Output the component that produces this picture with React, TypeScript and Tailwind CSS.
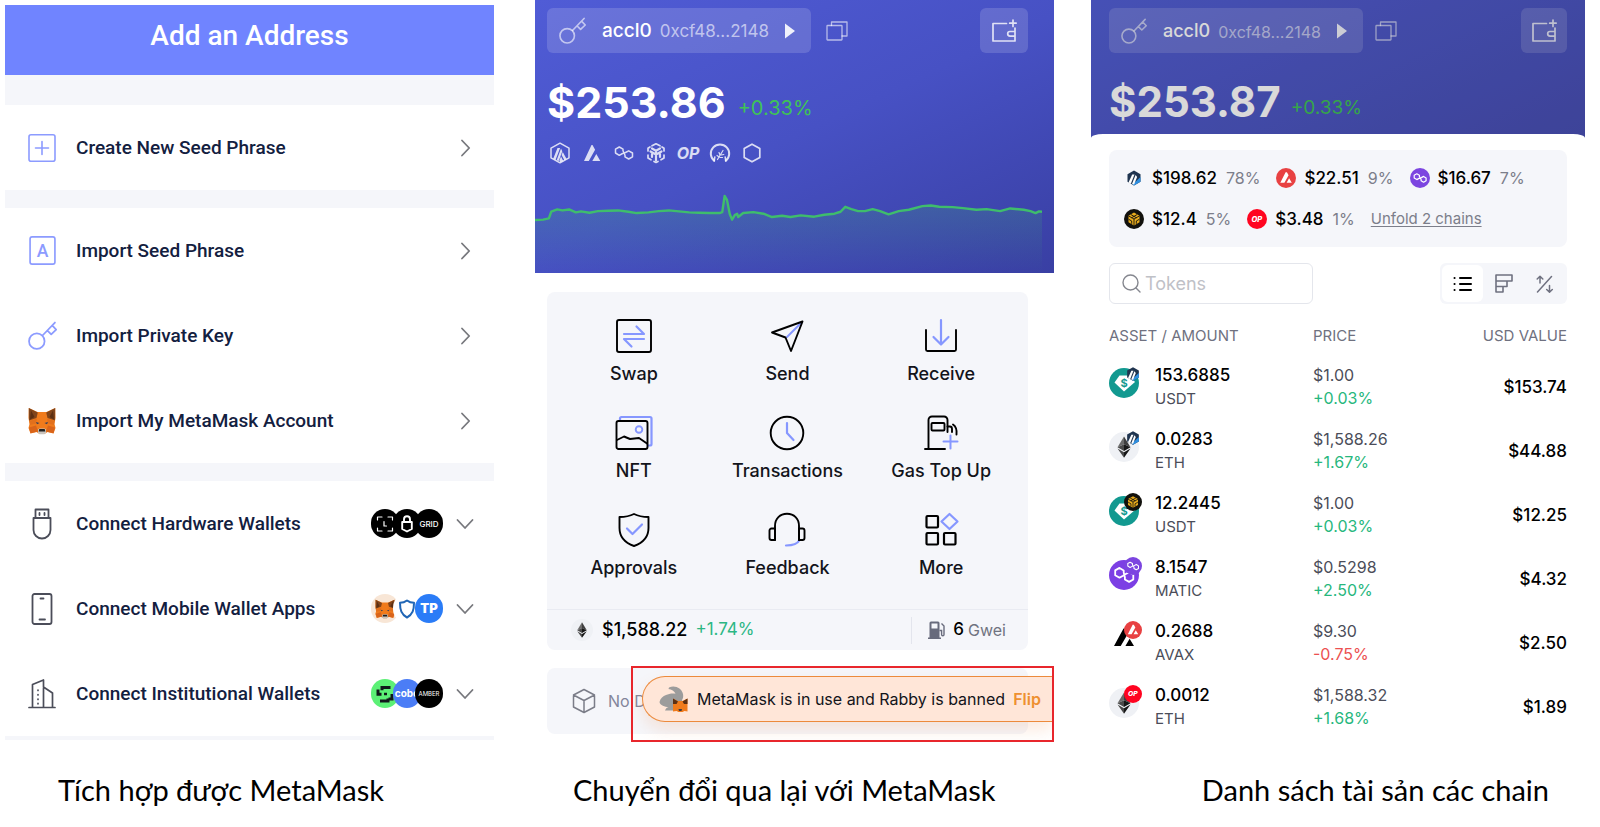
import type { ReactNode } from "react";

type IconProps = { className?: string };

const stroke = {
  fill: "none",
  stroke: "currentColor",
  strokeLinecap: "round" as const,
  strokeLinejoin: "round" as const,
};

/* ---------- shared icons ---------- */

function KeyIcon({ className }: IconProps) {
  return (
    <svg viewBox="0 0 28 28" className={className} {...stroke} strokeWidth="1.7" aria-hidden="true">
      <circle cx="8.5" cy="19.5" r="7.5" />
      <path d="M14 14 26 1.5M18.8 9.3l3.6 3.6 4.8-4.6-3.6-3.8" />
    </svg>
  );
}

function FoxIcon({ className }: IconProps) {
  return (
    <svg viewBox="0 0 28 28" className={className} aria-hidden="true">
      <path d="M.8 1 9.500 5h9L27.200 1l.3 10-1 6 1 4-2 5.500-6-1.600-3 2h-5l-3-2-6 1.600-2-5.500 1-4-1-6z" fill="#f07b1c" />
      <path d="M.8 1l9 4.500L8.500 11 1 13.500zM27.200 1l-9 4.500 1.300 5.500 7.500 2.500z" fill="#81441a" />
      <path d="M3 3.500 6.500 10 2 12.500zM25 3.500 21.500 10l4.500 2.500z" fill="#5c2f12" />
      <path d="M1.500 14 9 11.500l-1 5-6 1.500zM26.500 14 19 11.500l1 5 6 1.500z" fill="#e2701c" />
      <path d="M1 20.500 8 18.500l2 6-7.500 1.800zM27 20.500 20 18.500l-2 6 7.500 1.800z" fill="#d9641a" />
      <path d="M8 15l3.500 1-2.500 1.200zM20 15l-3.500 1 2.500 1.200z" fill="#333f5c" />
      <path d="M10 22.500l1.500-1h5l1.500 1v3l-1.600 1.700h-4.800L10 25.500z" fill="#c9c3bd" />
      <path d="M11.300 22h5.400l.6 2.400h-6.600z" fill="#22201f" />
    </svg>
  );
}

function EthMark({ className }: IconProps) {
  return (
    <svg viewBox="0 0 30 30" className={className} aria-hidden="true">
      <circle cx="15" cy="15" r="15" fill="#eff1f5" />
      <path d="M15 4.500 8.500 15.200 15 12.300z" fill="#6b6b6b" />
      <path d="M15 4.500l6.500 10.700L15 12.300z" fill="#3f3f3f" />
      <path d="M8.500 15.200 15 12.300V19zM8.500 16.600 15 20.300v5.400z" fill="#4a4a4a" />
      <path d="M21.500 15.200 15 12.300V19zM21.500 16.600 15 20.300v5.400z" fill="#171717" />
    </svg>
  );
}

/* ---------- chain badges ---------- */

function Arbitrum({ className }: IconProps) {
  return (
    <svg viewBox="0 0 20 20" className={className} aria-hidden="true">
      <path d="M10 2.500l6.500 3.700v7.600L10 17.500l-6.500-3.700V6.200z" fill="#1f344f" />
      <path d="M16.500 9v4.800L10 17.500 8.500 16.500z" fill="#2f8fe0" />
      <path d="M8.200 6.500h2.300L6.800 15.700l-2.300-1.300z" fill="#fff" />
      <path d="M11.600 7l1.500 2-3 7.500-2.100-.5z" fill="#fff" />
    </svg>
  );
}

function Avalanche({ className }: IconProps) {
  return (
    <svg viewBox="0 0 20 20" className={className} aria-hidden="true">
      <circle cx="10" cy="10" r="10" fill="#e84142" />
      <path d="M9.600 4.200h1.300l1.700 3.100-4.200 7.500H4.300zM13.100 10.300l2.700 4.500h-5.200z" fill="#fff" />
    </svg>
  );
}

function Polygon({ className }: IconProps) {
  return (
    <svg viewBox="0 0 20 20" className={className} aria-hidden="true">
      <circle cx="10" cy="10" r="10" fill="#7c45e0" />
      <path
        d="M9 10.400 6.800 11.600 4.200 10.100V7.300l2.600-1.500 2.600 1.500v1.200l1.700 3v1.200l2.500 1.500 2.500-1.500V9.900l-2.500-1.500-2.200 1.200z"
        fill="none"
        stroke="#fff"
        strokeWidth="1.200"
        strokeLinejoin="round"
      />
    </svg>
  );
}

function Bnb({ className }: IconProps) {
  return (
    <svg viewBox="0 0 20 20" className={className} aria-hidden="true">
      <circle cx="10" cy="10" r="10" fill="#12110d" />
      <path d="M10 3.500l5.500 3.200v6.600L10 16.500l-5.500-3.200V6.700z" fill="#e8ab1c" />
      <path d="M4.500 6.900 10 10l5.500-3.100M10 10v6.500M6.800 5.500 12.500 8.800M13.200 5.500 7.500 8.800M4.700 10.300l3 1.700v2.800M15.300 10.300l-3 1.700v2.800" fill="none" stroke="#12110d" strokeWidth="0.900" />
    </svg>
  );
}

function Optimism({ className }: IconProps) {
  return (
    <svg viewBox="0 0 20 20" className={className} role="img" aria-label="Optimism">
      <circle cx="10" cy="10" r="10" fill="#ff0420" />
      <text x="9.800" y="12.600" textAnchor="middle" fontSize="7.500" fontWeight="800" fontStyle="italic" fill="#fff" className="font-['Inter',sans-serif]">
        OP
      </text>
    </svg>
  );
}

/* ---------- token icons ---------- */

function Usdt({ className }: IconProps) {
  return (
    <svg viewBox="0 0 30 30" className={className} role="img" aria-label="Tether">
      <circle cx="15" cy="15" r="15" fill="#129990" />
      <path d="M10.500 7.500h10L26 14 15 23.500 5.500 14.500z" fill="#fff" />
      <text x="15" y="18.500" textAnchor="middle" fontSize="11" fontWeight="700" fill="#129990" className="font-['Inter',sans-serif]">
        $
      </text>
    </svg>
  );
}

function Matic({ className }: IconProps) {
  return (
    <svg viewBox="0 0 30 30" className={className} aria-hidden="true">
      <circle cx="15" cy="15" r="15" fill="#7c3fe4" />
      <path
        d="M14 15.700 10.500 17.700 6.200 15.200V10.400l4.300-2.500 4.200 2.500v2.200l1.200 4.600v2.300l4.200 2.400 4.200-2.400v-4.900l-4.200-2.400-3.800 2.100z"
        fill="none"
        stroke="#fff"
        strokeWidth="1.800"
        strokeLinejoin="round"
      />
    </svg>
  );
}

function Avax({ className }: IconProps) {
  return (
    <svg viewBox="0 0 30 30" className={className} aria-hidden="true">
      <path d="M14.500 4.500h2l2.700 4.800L11.700 22H5zM20.600 14.800 25 22h-8.600z" fill="#000" />
    </svg>
  );
}

/* ---------- left panel ---------- */

function PlusBox({ className }: IconProps) {
  return (
    <svg viewBox="0 0 28 28" className={className} {...stroke} strokeWidth="1.600" aria-hidden="true">
      <rect x="1" y="0.800" width="26" height="26.400" rx="2" />
      <path d="M14 7.500v13M7.500 14h13" />
    </svg>
  );
}

function LetterBox({ className }: IconProps) {
  return (
    <svg viewBox="0 0 28 28" className={className} role="img" aria-label="Seed phrase">
      <rect x="2" y="0.800" width="24" height="26.400" rx="2" {...stroke} strokeWidth="1.600" />
      <text x="14" y="20" textAnchor="middle" fontSize="17" fontWeight="500" fill="currentColor" className="font-['Roboto',sans-serif]">
        A
      </text>
    </svg>
  );
}

function UsbIcon({ className }: IconProps) {
  return (
    <svg viewBox="0 0 30 32" className={className} {...stroke} strokeWidth="1.800" aria-hidden="true">
      <path d="M8.500 10V1.500h13V10M6.500 10h17v12a8.500 8.500 0 0 1-17 0z" />
      <path d="M12.500 5v2M17.500 5v2" />
    </svg>
  );
}

function PhoneIcon({ className }: IconProps) {
  return (
    <svg viewBox="0 0 30 32" className={className} {...stroke} strokeWidth="1.800" aria-hidden="true">
      <rect x="5.500" y="1" width="19" height="30" rx="2" />
      <path d="M13.500 5.500h3M12.500 26.500h5.500" />
    </svg>
  );
}

function BuildingIcon({ className }: IconProps) {
  return (
    <svg viewBox="0 0 30 32" className={className} {...stroke} strokeWidth="1.700" aria-hidden="true">
      <path d="M2 29.500h26M5.500 29.500V6.500L16.500 2v27.500M16.500 9l9 6v14.500" />
      <path d="M11 12v.5M11 16.500v.5M11 21v.5M11 25.300v.5" />
    </svg>
  );
}

function Chevron({ down = false }: { down?: boolean }) {
  return (
    <svg viewBox="0 0 18 18" className="size-[18px] text-[#77787d]" {...stroke} strokeWidth="1.800" aria-hidden="true">
      <path d={down ? "M1.500 5 9 13l7.500-8" : "M6 1.500 13.200 9 6 16.500"} />
    </svg>
  );
}

function Disc({ children, className }: { children: ReactNode; className: string }) {
  return (
    <span className={"-ml-1.5 flex h-[29px] w-7 items-center justify-center overflow-hidden rounded-full font-['Inter',sans-serif] " + className}>
      {children}
    </span>
  );
}

const hardwareLogos = (
  <>
    <Disc className="bg-black text-white">
      <svg viewBox="0 0 18 18" className="size-[18px]" {...stroke} strokeWidth="1.200" aria-hidden="true">
        <path d="M1.500 5V2H6M12 2h4.500v3M1.500 13v3H6M12 16h4.500v-3M8 6.500v4.500h2.500" />
      </svg>
    </Disc>
    <Disc className="bg-black text-white">
      <svg viewBox="0 0 14 18" className="h-[18px] w-3.5" {...stroke} strokeWidth="1.900" aria-hidden="true">
        <path d="M4 7V4.200a3 3 0 0 1 6 0V7M2.200 7h9.600v7L7 16.500 2.200 14z" />
      </svg>
    </Disc>
    <Disc className="bg-black text-[8px] font-medium text-white">GRID</Disc>
  </>
);

const mobileLogos = (
  <>
    <Disc className="bg-[#f8e6d6]">
      <FoxIcon className="size-5" />
    </Disc>
    <Disc className="bg-white text-[#2166b5]">
      <svg viewBox="0 0 18 20" className="h-5 w-[18px]" {...stroke} strokeWidth="2" aria-hidden="true">
        <path d="M9 1.500c2.200 1.700 4.500 2.300 7 2.300 0 7.200-1.300 11.700-7 14.700C3.300 15.500 2 11 2 3.800c2.500 0 4.800-.6 7-2.300z" />
      </svg>
    </Disc>
    <Disc className="bg-[#2a7cf7] text-[13px] font-black text-white">TP</Disc>
  </>
);

const institutionLogos = (
  <>
    <Disc className="bg-[#5cf076] text-[#10181a]">
      <svg viewBox="0 0 18 18" className="size-[18px]" fill="none" stroke="currentColor" strokeWidth="3" aria-hidden="true">
        <path d="M14.500 2.500H6v2.800M2 4.500v4.800h3.500M16 9v5h-3.500M4 16h8v-2.500" />
        <path d="M8 9h3" strokeWidth="2.500" />
      </svg>
    </Disc>
    <Disc className="bg-[#4b7df6] text-[10px] font-bold text-white">cobo</Disc>
    <Disc className="bg-black text-[6px] text-white">AMBER</Disc>
  </>
);

function OptionRow({ icon, label, logos }: { icon: ReactNode; label: string; logos?: ReactNode }) {
  return (
    <button type="button" className="flex h-[85px] w-full items-center pr-5 pl-[21px] text-left">
      <span className="flex w-8 justify-center">{icon}</span>
      <span className="ml-[18px] flex-1 pt-0.5 text-[19px] font-medium whitespace-nowrap text-[#13203f]">{label}</span>
      {logos && <span className="mr-[13px] flex">{logos}</span>}
      <Chevron down={Boolean(logos)} />
    </button>
  );
}

function AddAddressPanel() {
  return (
    <section className="pt-[5px] pr-1 font-['Roboto',sans-serif]">
      <h1 className="flex h-[70px] items-center justify-center bg-[#7084ff] pb-2 text-[28px] font-medium text-white">
        Add an Address
      </h1>
      <div className="h-[30px] bg-[#f5f6fa]" />
      <OptionRow icon={<PlusBox className="size-7 text-[#8c9bff]" />} label="Create New Seed Phrase" />
      <div className="h-[18px] bg-[#f5f6fa]" />
      <OptionRow icon={<LetterBox className="size-[29px] text-[#8c9bff]" />} label="Import Seed Phrase" />
      <OptionRow icon={<KeyIcon className="size-[29px] text-[#8c9bff]" />} label="Import Private Key" />
      <OptionRow icon={<FoxIcon className="size-7" />} label="Import My MetaMask Account" />
      <div className="h-[18px] bg-[#f5f6fa]" />
      <OptionRow icon={<UsbIcon className="h-8 w-[30px] text-[#4b4d59]" />} label="Connect Hardware Wallets" logos={hardwareLogos} />
      <OptionRow icon={<PhoneIcon className="h-8 w-[30px] text-[#4b4d59]" />} label="Connect Mobile Wallet Apps" logos={mobileLogos} />
      <OptionRow icon={<BuildingIcon className="h-8 w-[30px] text-[#4b4d59]" />} label="Connect Institutional Wallets" logos={institutionLogos} />
      <div className="h-1 bg-[#f5f6fa]" />
    </section>
  );
}

/* ---------- wallet header ---------- */

function AccountBar({ compact = false }: { compact?: boolean }) {
  return (
    <div className="flex items-center text-white">
      <button type="button" className="flex h-[45px] items-center rounded-md bg-white/15 pr-4 pl-3">
        <KeyIcon className={compact ? "size-[26px] text-white/60" : "size-[27px] text-white/60"} />
        <span className={compact ? "ml-4 text-lg font-medium" : "ml-4 pt-0.5 text-[19px] font-medium"}>accl0</span>
        <span className={compact ? "ml-2 pt-0.5 text-base text-white/60" : "ml-2 pt-0.5 text-[17px] text-white/60"}>0xcf48...2148</span>
        <svg viewBox="0 0 10 16" className="ml-4 h-4 w-2.5 text-white/90" aria-hidden="true">
          <path d="M0 0.500 10 8 0 15.500z" fill="currentColor" />
        </svg>
      </button>
      <button type="button" aria-label="Copy address" className={compact ? "ml-3 text-white/60" : "ml-[15px] text-white/60"}>
        <svg viewBox="0 0 22 20" className="h-5 w-[22px]" {...stroke} strokeWidth="1.300" aria-hidden="true">
          <rect x="1" y="4.500" width="15" height="14.500" rx="0.500" />
          <path d="M5.500 4.500V1H21v14h-5" />
        </svg>
      </button>
      <button
        type="button"
        aria-label="Add wallet"
        className={
          (compact ? "w-[46px]" : "w-12") + " ml-auto flex h-[45px] items-center justify-center rounded-md bg-white/15 text-white/80"
        }
      >
        <svg viewBox="0 0 26 24" className="h-6 w-[26px]" {...stroke} strokeWidth="1.700" aria-hidden="true">
          <path d="M15.500 4.500H2V22h22V9M24 12.500h-5a2.300 2.300 0 0 0 0 4.600H24M22 1v6.500M18.700 4.200h6.500" />
        </svg>
      </button>
    </div>
  );
}

function Balance({ value, compact = false }: { value: string; compact?: boolean }) {
  return (
    <div className={compact ? "mt-6 flex items-end gap-2.5" : "mt-6 flex items-end gap-3"}>
      <span className={(compact ? "text-[42px]" : "text-[43px]") + " leading-[50px] font-bold text-white"}>{value}</span>
      <span className={(compact ? "text-[19px]" : "text-xl") + " leading-[38px] text-[#3fc257]"}>+0.33%</span>
    </div>
  );
}

const trend =
  "M14 659 38 658 55 654 62 634 80 627 95 630 115 627 135 636 150 633 175 637 200 632 230 631 260 630 290 634 315 638 350 636 380 632 410 630 440 633 470 636 500 637 530 638 560 638 568 635 575 586 582 598 590 640 597 658 605 644 612 640 615 650 630 638 660 635 690 640 715 650 745 646 770 650 800 645 840 649 870 643 900 640 918 634 932 619 950 626 970 632 990 632 1013 626 1035 632 1060 642 1090 632 1120 628 1160 617 1185 615 1210 619 1250 620 1280 623 1320 628 1350 626 1390 632 1420 624 1460 628 1480 632 1495 638 1505 633 1514 634";

function TrendChart() {
  return (
    <svg viewBox="14 571 1500 249" preserveAspectRatio="none" className="block h-[82px] w-full" role="img" aria-label="Balance over the last day">
      <defs>
        <linearGradient id="trend-fill" x1="0" y1="0" x2="0" y2="1">
          <stop offset="0" stopColor="#3fb56f" stopOpacity="0.240" />
          <stop offset="1" stopColor="#3fb56f" stopOpacity="0" />
        </linearGradient>
      </defs>
      <path d={trend + "V820H14z"} fill="url(#trend-fill)" />
      <path d={trend} fill="none" stroke="#3fbd6c" strokeWidth="2.400" strokeLinejoin="round" vectorEffect="non-scaling-stroke" />
    </svg>
  );
}

function ChainStrip() {
  const box = "size-[22px]";
  return (
    <div className="mt-[15px] flex gap-2.5 pl-0.5 text-white/80">
      <svg viewBox="0 0 22 22" className={box} aria-hidden="true">
        <path d="M11 1.200l9 5v9.600l-9 5-9-5V6.200z" {...stroke} strokeWidth="1.500" />
        <path d="M8.500 6h2.600L6.500 18 4.200 16.700zM12 6.500l1.300 2.800L9.700 19l-2-.8zM13.800 10l3.800 7-2.200 1.300-2.800-5.300zM12 14.500l2.300 4.500-3 1.300-1-1.500z" fill="currentColor" />
      </svg>
      <svg viewBox="0 0 22 22" className={box} aria-hidden="true">
        <path d="M10.500 3h1l2.600 4.800L7.800 19H3zM15.300 12l4 7h-8z" fill="currentColor" />
      </svg>
      <svg viewBox="0 0 22 22" className={box} {...stroke} strokeWidth="1.500" aria-hidden="true">
        <path d="M9.500 11.500 6.300 13.300 2.500 11V7.200l3.800-2.200L10 7.200v1.600l2 4.400v1.600l3.700 2.200 3.800-2.200v-3.800l-3.800-2.200-3.200 1.700z" />
      </svg>
      <svg viewBox="0 0 22 22" className={box} {...stroke} strokeWidth="1.700" aria-hidden="true">
        <path d="M7 3.800 11 1.800l4 2M3 9V6.300L5 5M19 9V6.300L17 5M3 13v3l3 1.800M19 13v3l-3 1.800M9 19.500l2 1 2-1" />
        <path d="M7 6.500l4 2.200 4-2.200M5.500 9.500 11 12.500l5.500-3M11 9v9.500M7 11.500v3.500M15 11.500v3.500" strokeWidth="2.200" />
      </svg>
      <svg viewBox="0 0 22 22" className={box + " overflow-visible"} role="img" aria-label="Optimism">
        <text x="11" y="17" textAnchor="middle" fontSize="16" fontWeight="700" fontStyle="italic" fill="currentColor" className="font-['Inter',sans-serif]">
          OP
        </text>
      </svg>
      <svg viewBox="0 0 22 22" className={box} {...stroke} strokeWidth="2" aria-hidden="true">
        <path d="M5.200 18.800a9.200 9.200 0 1 1 11.600 0" />
        <path d="M5.200 18.800 5.800 15M16.800 18.800 16.200 15" strokeWidth="1.600" />
        <path d="M8.500 17.500l5.500-9M8 13.500l2 1.500M10 10.500l1 2.500M14.800 12.500l-2.500.5M13.500 15.500l-2.500 0" strokeWidth="1.200" />
      </svg>
      <svg viewBox="0 0 22 22" className={box} {...stroke} strokeWidth="1.700" aria-hidden="true">
        <path d="M11 2.200l7.800 4.400v8.800L11 19.800l-7.800-4.400V6.600z" />
      </svg>
    </div>
  );
}

/* ---------- actions ---------- */

const accent = "#8697ff";

function ActionSvg({ children }: { children: ReactNode }) {
  return (
    <svg viewBox="0 0 38 36" className="h-9 w-[38px] text-black" {...stroke} strokeWidth="1.900" aria-hidden="true">
      {children}
    </svg>
  );
}

const actions: { label: string; icon: ReactNode }[] = [
  {
    label: "Swap",
    icon: (
      <>
        <rect x="2" y="2" width="34" height="32" rx="2" />
        <path d="M9 16h20l-7.500-7.500M29 21H9l7.500 7.500" stroke={accent} strokeWidth="2.200" />
      </>
    ),
  },
  {
    label: "Send",
    icon: (
      <>
        <path d="M19 19 34 4" stroke={accent} strokeWidth="2" />
        <path d="M34.500 3.500 4 14.500l13.500 5L23 33z" />
      </>
    ),
  },
  {
    label: "Receive",
    icon: (
      <>
        <path d="M4 12v19.500a1.500 1.500 0 0 0 1.500 1.500h27a1.500 1.500 0 0 0 1.500-1.500V12" />
        <path d="M19 2v24M11.500 19l7.500 7.500 7.500-7.500" stroke={accent} strokeWidth="2.200" />
      </>
    ),
  },
  {
    label: "NFT",
    icon: (
      <>
        <path d="M5 6V3.500A1.500 1.500 0 0 1 6.500 2H35a1.500 1.500 0 0 1 1.500 1.500V29a1.500 1.500 0 0 1-1.500 1.500h-2" stroke={accent} strokeWidth="2.200" />
        <rect x="1.500" y="6" width="31" height="28" rx="2" />
        <circle cx="24" cy="14.500" r="3.300" stroke={accent} />
        <path d="M2 25l7-3.500L15 24l9-1 8 5.500" />
      </>
    ),
  },
  {
    label: "Transactions",
    icon: (
      <>
        <circle cx="19" cy="18" r="16.300" />
        <path d="M19 8v10l6.500 7" stroke={accent} strokeWidth="2.200" />
      </>
    ),
  },
  {
    label: "Gas Top Up",
    icon: (
      <>
        <path d="M3 34h20M6.500 34V5a3.500 3.500 0 0 1 3.500-3.500h12A3.500 3.500 0 0 1 25.500 5v12" />
        <rect x="9.500" y="8" width="13" height="7.500" rx="1" />
        <path d="M25.500 11.500h2.500c1.500 0 2 1 2 2.500v3M31 9.500c3 2 4 5.500 3.500 10" />
        <path d="M28.500 20.500v13M21.500 26.500h14" stroke={accent} strokeWidth="2" />
      </>
    ),
  },
  {
    label: "Approvals",
    icon: (
      <>
        <path d="M19 2c4.500 2.300 9.500 3 14.500 3v11c0 9-6 15-14.500 18C10.500 31 4.500 25 4.500 16V5c5 0 10-.7 14.500-3z" />
        <path d="M12 16.500l5.500 5.500 9.500-9.500" stroke={accent} strokeWidth="2.200" />
      </>
    ),
  },
  {
    label: "Feedback",
    icon: (
      <>
        <path d="M31.500 28c-2 4-6 5.500-13.500 5.500" stroke={accent} strokeWidth="2.200" />
        <path d="M7 28V14C7 6.500 12 1.800 19 1.800S31 6.500 31 14v14" />
        <path d="M7 16.500H3.500A2 2 0 0 0 1.500 18.500V26A2 2 0 0 0 3.500 28H7zM31 16.500h3.500a2 2 0 0 1 2 2V26a2 2 0 0 1-2 2H31z" />
      </>
    ),
  },
  {
    label: "More",
    icon: (
      <>
        <rect x="4.500" y="4" width="11.500" height="11.500" rx="1" strokeWidth="2.200" />
        <rect x="4.500" y="21" width="11.500" height="11.500" rx="1" strokeWidth="2.200" />
        <rect x="22" y="21" width="11.500" height="11.500" rx="1" strokeWidth="2.200" />
        <path d="M27.500 2l8 7.500-8 7.500-8-7.500z" stroke={accent} strokeWidth="2.200" />
      </>
    ),
  },
];

function RabbyBadge() {
  return (
    <svg viewBox="0 0 30 26" className="h-[26px] w-[30px]" aria-hidden="true">
      <path
        d="M10 1.500C16-1 22.500 2 24 8c.5 2.500 0 4.500-1 6 1.500 3 0 8-2 10.500H6c1-2.500 2-3 3.500-3.500C6 21 1 19.500.5 16 1.500 12 4 10 7 9c3-1.500 7-2 9.500-1.200C15.500 5 12.500 3.200 9.500 3z"
        fill="#9c9c9c"
      />
      <path d="M14 12.500l5 2.500h4.500l5-2.500V25.500l-3-.5-2 1h-4l-2-1-3.500.5z" fill="#f07b1c" />
      <path d="M14 12.500l5 3-1.500 2.500H14zM28.500 12.500l-5 3 1.500 2.500h3.500z" fill="#5c3013" />
      <path d="M19.500 23h3.500l-.5 2h-2.500z" fill="#3c3c44" />
    </svg>
  );
}

function HomePanel() {
  return (
    <section className="font-['Inter',sans-serif]">
      <header className="bg-linear-155 from-[#505cd6] via-[#4751c4] to-[#393fa3]">
        <div className="pt-2 pr-[26px] pl-3">
          <AccountBar />
          <Balance value="$253.86" />
          <ChainStrip />
        </div>
        <div className="mt-[27px] pr-3">
          <TrendChart />
        </div>
      </header>

      <div className="mt-[19px] mr-[26px] ml-3 rounded-lg bg-[#f5f6fa]">
        <div className="grid grid-cols-3 gap-y-[29px] px-2.5 pt-[26px] pb-[29px]">
          {actions.map((action) => (
            <button key={action.label} type="button" className="flex h-[68px] flex-col items-center justify-between">
              <ActionSvg>{action.icon}</ActionSvg>
              <span className="text-lg leading-6 font-medium whitespace-nowrap text-[#13141a]">{action.label}</span>
            </button>
          ))}
        </div>
        <div className="flex h-[41px] items-center border-t border-[#e9ebf2] pr-[22px] pl-6">
          <EthMark className="size-[22px]" />
          <span className="ml-[9px] text-lg font-medium text-black">$1,588.22</span>
          <span className="ml-2 text-[17px] text-[#2bb784]">+1.74%</span>
          <span className="mr-4 ml-auto h-[27px] w-px bg-[#e3e5ed]" />
          <svg viewBox="0 0 18 18" className="size-[18px] text-[#686b7c]" aria-hidden="true">
            <path d="M1.500 16.500V2A1.500 1.500 0 0 1 3 .5h7A1.500 1.500 0 0 1 11.500 2v14.500H13V18H0v-1.500zM3.500 2.500v5h6v-5z" fill="currentColor" fillRule="evenodd" />
            <path d="M13.500 2.500 16 5v8.500a1.200 1.200 0 0 1-2.400 0V9.500H11.500" fill="none" stroke="currentColor" strokeWidth="1.400" />
          </svg>
          <span className="ml-[7px] text-[17px] font-medium text-black">6</span>
          <span className="ml-1 text-base text-[#707380]">Gwei</span>
        </div>
      </div>

      <div className="relative mt-[18px]">
        <div className="mr-[26px] ml-3 flex h-[66px] items-center rounded-lg bg-[#f5f6fa] pl-[25px] text-[#83859a]">
          <svg viewBox="0 0 24 26" className="h-[26px] w-6 text-[#7b7d88]" {...stroke} strokeWidth="1.500" aria-hidden="true">
            <path d="M12 1.500 22.500 7v12L12 24.500 1.500 19V7zM1.500 7 12 12.500 22.500 7M12 12.500v12" />
          </svg>
          <span className="ml-3 text-base">No D</span>
        </div>

        {/* callout laid over the connection bar */}
        <div className="absolute -top-0.5 right-0 left-24 h-[76px] overflow-hidden border-2 border-[#e8262c]">
          <div className="mt-2 ml-[9px] flex h-[46px] items-center rounded-l-full border border-r-0 border-[#ec8a3c] bg-[#ffe6d8] pl-4 shadow-[0_8px_16px_rgba(240,140,80,0.18)]">
            <RabbyBadge />
            <span className="ml-2 text-base whitespace-nowrap text-[#13141a]">MetaMask is in use and Rabby is banned</span>
            <button type="button" className="ml-2 text-base font-semibold text-[#ee9030]">
              Flip
            </button>
          </div>
        </div>
      </div>
    </section>
  );
}

/* ---------- assets ---------- */

const chains = [
  { name: "Arbitrum", Icon: Arbitrum, usd: "$198.62", share: "78%" },
  { name: "Avalanche", Icon: Avalanche, usd: "$22.51", share: "9%" },
  { name: "Polygon", Icon: Polygon, usd: "$16.67", share: "7%" },
  { name: "BNB Chain", Icon: Bnb, usd: "$12.4", share: "5%" },
  { name: "Optimism", Icon: Optimism, usd: "$3.48", share: "1%" },
];

const tokens = [
  { Icon: Usdt, Chain: Arbitrum, amount: "153.6885", symbol: "USDT", price: "$1.00", change: "+0.03%", usd: "$153.74" },
  { Icon: EthMark, Chain: Arbitrum, amount: "0.0283", symbol: "ETH", price: "$1,588.26", change: "+1.67%", usd: "$44.88" },
  { Icon: Usdt, Chain: Bnb, amount: "12.2445", symbol: "USDT", price: "$1.00", change: "+0.03%", usd: "$12.25" },
  { Icon: Matic, Chain: Polygon, amount: "8.1547", symbol: "MATIC", price: "$0.5298", change: "+2.50%", usd: "$4.32" },
  { Icon: Avax, Chain: Avalanche, amount: "0.2688", symbol: "AVAX", price: "$9.30", change: "-0.75%", usd: "$2.50" },
  { Icon: EthMark, Chain: Optimism, amount: "0.0012", symbol: "ETH", price: "$1,588.32", change: "+1.68%", usd: "$1.89" },
];

function AssetsPanel() {
  return (
    <section className="font-['Inter',sans-serif]">
      <div className="relative bg-linear-155 from-[#535fd6] to-[#484fb3]">
        <div className="px-[18px] pt-2 pb-[7px]">
          <AccountBar compact />
          <Balance value="$253.87" compact />
        </div>
        <div className="pointer-events-none absolute inset-0 bg-black/15" />
        <div className="relative h-1 rounded-t-[12px_4px] bg-white" />
      </div>

      <div className="px-[18px] pt-3">
        <ul className="flex flex-wrap items-center gap-x-4 gap-y-4 rounded-lg bg-[#f5f6fa] px-[15px] py-4">
          {chains.map(({ name, Icon, usd, share }) => (
            <li key={name} className="flex items-center leading-6">
              <Icon className="size-5" />
              <span className="ml-2 text-[17px] font-medium text-black">{usd}</span>
              <span className="ml-[9px] text-base text-[#7c7e8a]">{share}</span>
            </li>
          ))}
          <li>
            <a href="#chains" className="text-[15px] leading-6 text-[#7c7e8a] underline underline-offset-2">
              Unfold 2 chains
            </a>
          </li>
        </ul>

        <div className="mt-4 flex items-center justify-between">
          <div className="flex h-[41px] w-[204px] items-center rounded-md border border-[#e4e6ec] pr-2 pl-3">
            <label htmlFor="token-search" aria-label="Search tokens">
              <svg viewBox="0 0 19 19" className="size-[19px] text-[#85878f]" {...stroke} strokeWidth="1.400" aria-hidden="true">
                <circle cx="8.500" cy="8.500" r="7.500" />
                <path d="M14 14l4 4" />
              </svg>
            </label>
            <input
              id="token-search"
              type="text"
              placeholder="Tokens"
              className="h-full min-w-0 flex-1 pl-1 text-lg outline-none placeholder:text-[#bfc1c7]"
            />
          </div>
          <div className="flex h-[41px] w-[127px] rounded-md bg-[#f5f6fa] p-0.5">
            <button type="button" aria-label="List view" className="flex flex-1 items-center justify-center rounded-md bg-white text-black">
              <svg viewBox="0 0 19 16" className="h-4 w-[19px]" {...stroke} strokeWidth="2" aria-hidden="true">
                <path d="M7 2h11M7 8h11M7 14h11M1.500 2h.1M1.500 8h.1M1.500 14h.1" />
              </svg>
            </button>
            <button type="button" aria-label="Summary view" className="flex flex-1 items-center justify-center text-[#6f7180]">
              <svg viewBox="0 0 18 19" className="h-[19px] w-[18px]" {...stroke} strokeWidth="1.600" aria-hidden="true">
                <path d="M1 1h16v6H1zM1 7h11v5.500H1zM1 12.500h7V18H1zM1 1v17" />
              </svg>
            </button>
            <button type="button" aria-label="Sort by change" className="flex flex-1 items-center justify-center text-[#6f7180]">
              <svg viewBox="0 0 18 18" className="size-[18px]" {...stroke} strokeWidth="1.500" aria-hidden="true">
                <path d="M15.500 1.500 1.500 17M4 8V1.500M1.200 4 4 1.200 6.800 4M13.500 10.500v6.500M10.700 14.500l2.800 2.700 2.800-2.700" />
              </svg>
            </button>
          </div>
        </div>

        <table className="mt-5 w-full table-fixed text-left">
          <thead className="text-[15px] leading-6 text-[#6f7180]">
            <tr className="h-[31px] align-top">
              <th className="w-[204px] font-normal">ASSET / AMOUNT</th>
              <th className="font-normal">PRICE</th>
              <th className="text-right font-normal">USD VALUE</th>
            </tr>
          </thead>
          <tbody>
            {tokens.map(({ Icon, Chain, amount, symbol, price, change, usd }) => (
              <tr key={amount} className="h-16 leading-[23px]">
                <td>
                  <div className="flex gap-4">
                    <span className="relative mt-1 size-[30px]">
                      <Icon className="size-[30px]" />
                      <Chain className="absolute -top-[3px] left-[15px] size-[18px]" />
                    </span>
                    <span className="flex flex-col">
                      <span className="text-[17px] font-medium text-black">{amount}</span>
                      <span className="text-[15px] text-[#4b4d59]">{symbol}</span>
                    </span>
                  </div>
                </td>
                <td>
                  <div className="text-base leading-[23px] text-[#4b4d59]">{price}</div>
                  <div className={change.startsWith("-") ? "text-base leading-[23px] text-[#ec5151]" : "text-base leading-[23px] text-[#27b77d]"}>
                    {change}
                  </div>
                </td>
                <td className="text-right text-[17px] font-medium text-black">{usd}</td>
              </tr>
            ))}
          </tbody>
        </table>
      </div>
    </section>
  );
}

export default function App() {
  return (
    <main className="grid grid-cols-[493fr_519fr_494fr] gap-x-[37px] bg-white pr-[15px] pl-[5px]">
      <AddAddressPanel />
      <HomePanel />
      <AssetsPanel />
      <p className="mt-8 pl-[53px] font-['Lato','Noto_Sans',sans-serif] text-[29px] leading-9 whitespace-nowrap text-black">Tích hợp được MetaMask</p>
      <p className="mt-8 pl-[38px] font-['Lato','Noto_Sans',sans-serif] text-[29px] leading-9 whitespace-nowrap text-black">Chuyển đổi qua lại với MetaMask</p>
      <p className="mt-8 pr-9 text-right font-['Lato','Noto_Sans',sans-serif] text-[29px] leading-9 whitespace-nowrap text-black">Danh sách tài sản các chain</p>
    </main>
  );
}
